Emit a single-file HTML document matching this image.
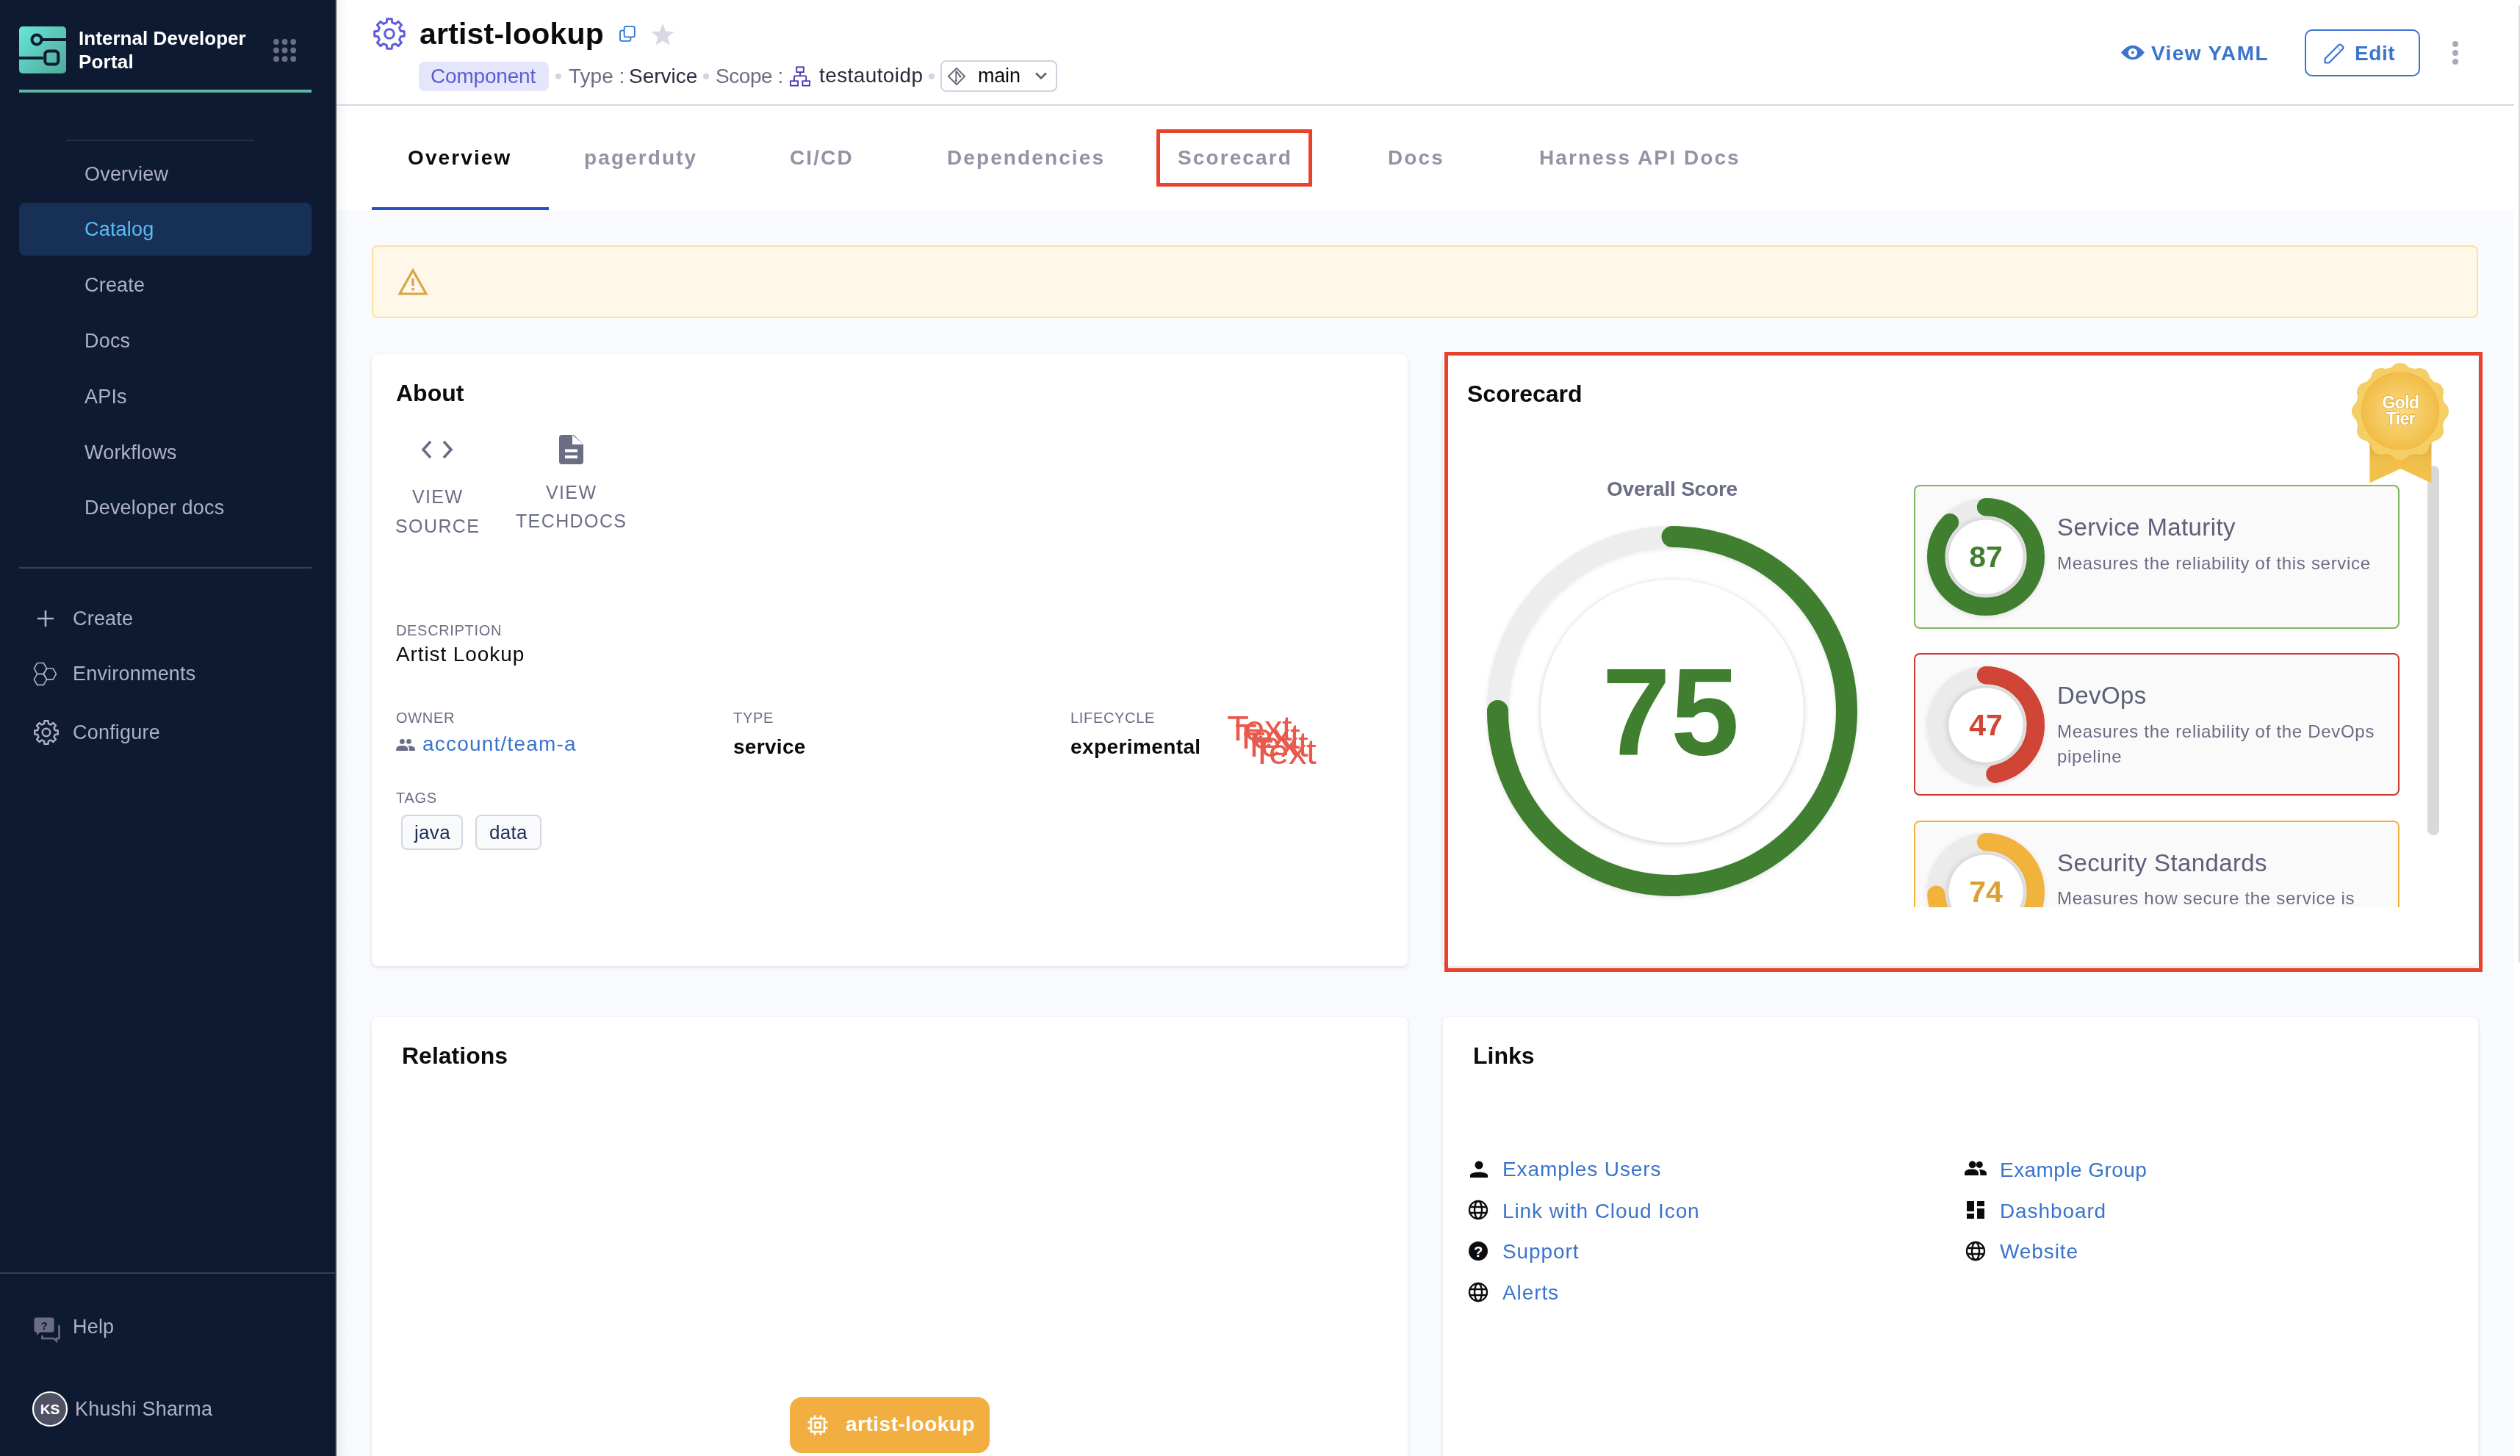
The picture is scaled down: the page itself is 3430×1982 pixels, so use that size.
<!DOCTYPE html>
<html><head><meta charset="utf-8">
<style>
*{box-sizing:border-box;margin:0;padding:0}
html,body{width:3430px;height:1982px;overflow:hidden;background:#fff;font-family:"Liberation Sans",sans-serif}
.a{position:absolute;line-height:1;white-space:nowrap;will-change:transform}
.card{position:absolute;background:#fff;border-radius:8px;box-shadow:0 0 1px rgba(40,41,61,0.10),0 2px 5px rgba(96,97,112,0.15)}
</style></head><body>

<div style="position:absolute;left:0px;top:0px;width:456px;height:1982px;background:#0E1A31"></div>
<div style="position:absolute;left:456px;top:0px;width:2px;height:1982px;background:#383A48"></div>
<svg style="position:absolute;left:26px;top:36px" width="64" height="64" viewBox="0 0 64 64"><defs><linearGradient id="lg" x1="0" y1="0" x2="1" y2="1"><stop offset="0" stop-color="#66E6D6"/><stop offset="1" stop-color="#4FA99B"/></linearGradient></defs>
<rect x="0" y="0" width="64" height="64" rx="5" fill="url(#lg)"/>
<circle cx="24" cy="18" r="6.5" fill="none" stroke="#0E1A31" stroke-width="4"/>
<path d="M30 18H64" stroke="#0E1A31" stroke-width="4"/>
<rect x="35.3" y="33.5" width="18" height="18" rx="4.5" fill="none" stroke="#0E1A31" stroke-width="4"/>
<path d="M0 43H33" stroke="#0E1A31" stroke-width="4"/></svg>
<div class="a" style="left:107.0px;top:38.8px;font-size:26px;color:#fff;font-weight:bold;letter-spacing:0.05px">Internal Developer</div>
<div class="a" style="left:107.0px;top:71.1px;font-size:26px;color:#fff;font-weight:bold;letter-spacing:0.2px">Portal</div>
<svg style="position:absolute;left:372px;top:53px" width="32" height="32" viewBox="0 0 32 32"><circle cx="4" cy="4" r="3.9" fill="#6B6D85"/><circle cx="4" cy="15.5" r="3.9" fill="#6B6D85"/><circle cx="4" cy="27.2" r="3.9" fill="#6B6D85"/><circle cx="15.6" cy="4" r="3.9" fill="#6B6D85"/><circle cx="15.6" cy="15.5" r="3.9" fill="#6B6D85"/><circle cx="15.6" cy="27.2" r="3.9" fill="#6B6D85"/><circle cx="27.2" cy="4" r="3.9" fill="#6B6D85"/><circle cx="27.2" cy="15.5" r="3.9" fill="#6B6D85"/><circle cx="27.2" cy="27.2" r="3.9" fill="#6B6D85"/></svg>
<div style="position:absolute;left:26px;top:122px;width:398px;height:4px;background:#5FB8A0"></div>
<div style="position:absolute;left:90px;top:190px;width:256px;height:2px;background:#262F42"></div>
<div style="position:absolute;left:26px;top:276px;width:398px;height:72px;background:#173156;border-radius:8px"></div>
<div class="a" style="left:114.5px;top:223.5px;font-size:27px;color:#AEB0C4;letter-spacing:0.2px">Overview</div>
<div class="a" style="left:114.5px;top:299.3px;font-size:27px;color:#5BBCF5;letter-spacing:0.2px">Catalog</div>
<div class="a" style="left:114.5px;top:375.1px;font-size:27px;color:#AEB0C4;letter-spacing:0.2px">Create</div>
<div class="a" style="left:114.5px;top:450.9px;font-size:27px;color:#AEB0C4;letter-spacing:0.2px">Docs</div>
<div class="a" style="left:114.5px;top:526.7px;font-size:27px;color:#AEB0C4;letter-spacing:0.2px">APIs</div>
<div class="a" style="left:114.5px;top:602.5px;font-size:27px;color:#AEB0C4;letter-spacing:0.2px">Workflows</div>
<div class="a" style="left:114.5px;top:678.3px;font-size:27px;color:#AEB0C4;letter-spacing:0.2px">Developer docs</div>
<div style="position:absolute;left:26px;top:772px;width:398px;height:2px;background:#3A3F4E"></div>
<svg style="position:absolute;left:50px;top:830px" width="24" height="24" viewBox="0 0 24 24"><path d="M12 1V23M1 12H23" stroke="#AEB0C4" stroke-width="2.6"/></svg>
<div class="a" style="left:99.0px;top:828.5px;font-size:27px;color:#AEB0C4;letter-spacing:0.2px">Create</div>
<svg style="position:absolute;left:44px;top:900px" width="36" height="36" viewBox="0 0 36 36"><g fill="none" stroke="#AEB0C4" stroke-width="1.6"><path d="M19.60,10.00 L15.30,17.45 L6.70,17.45 L2.40,10.00 L6.70,2.55 L15.30,2.55Z"/><path d="M32.50,17.45 L28.20,24.90 L19.60,24.90 L15.30,17.45 L19.60,10.00 L28.20,10.00Z"/><path d="M19.60,24.90 L15.30,32.35 L6.70,32.35 L2.40,24.90 L6.70,17.45 L15.30,17.45Z"/></g></svg>
<div class="a" style="left:99.0px;top:904.4px;font-size:27px;color:#AEB0C4;letter-spacing:0.2px">Environments</div>
<svg style="position:absolute;left:44px;top:978px" width="38" height="38" viewBox="0 0 38 38"><path d="M16.06,7.16 L16.50,3.20 L21.50,3.20 L21.94,7.16 L25.29,8.55 L28.40,6.06 L31.94,9.60 L29.45,12.71 L30.84,16.06 L34.80,16.50 L34.80,21.50 L30.84,21.94 L29.45,25.29 L31.94,28.40 L28.40,31.94 L25.29,29.45 L21.94,30.84 L21.50,34.80 L16.50,34.80 L16.06,30.84 L12.71,29.45 L9.60,31.94 L6.06,28.40 L8.55,25.29 L7.16,21.94 L3.20,21.50 L3.20,16.50 L7.16,16.06 L8.55,12.71 L6.06,9.60 L9.60,6.06 L12.71,8.55Z" fill="none" stroke="#AEB0C4" stroke-width="2.4" stroke-linejoin="round"/><circle cx="19" cy="19" r="5.3" fill="none" stroke="#AEB0C4" stroke-width="2.4"/></svg>
<div class="a" style="left:99.0px;top:984.1px;font-size:27px;color:#AEB0C4;letter-spacing:0.2px">Configure</div>
<div style="position:absolute;left:0px;top:1732px;width:456px;height:2px;background:#3A3F4E"></div>
<svg style="position:absolute;left:46px;top:1793px" width="38" height="36" viewBox="0 0 38 36"><rect x="0.5" y="0.5" width="27" height="20" rx="3" fill="#6B6D85"/><path d="M4 19 L4 25 L10 19Z" fill="#6B6D85"/><path d="M34.5 11 V29 H31 V32.5 L27 29 H11.5 V25" fill="none" stroke="#6B6D85" stroke-width="2.6"/><text x="14" y="17" font-size="15" font-weight="bold" fill="#0E1A31" text-anchor="middle" font-family="Liberation Sans">?</text></svg>
<div class="a" style="left:99.0px;top:1793.1px;font-size:27px;color:#AEB0C4;letter-spacing:0.2px">Help</div>
<svg style="position:absolute;left:43px;top:1893px" width="50" height="50" viewBox="0 0 50 50"><circle cx="25" cy="25" r="23" fill="#4F5063" stroke="#fff" stroke-width="2.2"/><text x="25" y="32" font-size="19" font-weight="bold" fill="#fff" text-anchor="middle" font-family="Liberation Sans">KS</text></svg>
<div class="a" style="left:101.5px;top:1905.3px;font-size:27px;color:#AEB0C4;letter-spacing:0.2px">Khushi Sharma</div>
<div style="position:absolute;left:458px;top:0px;width:2964px;height:1982px;background:#F9FAFE"></div>
<div style="position:absolute;left:458px;top:0px;width:2964px;height:286px;background:#fff"></div>
<div style="position:absolute;left:459px;top:0px;width:13px;height:1982px;background:linear-gradient(90deg,rgba(30,30,60,0.06),rgba(30,30,60,0))"></div>
<div style="position:absolute;left:458px;top:142px;width:2964px;height:2px;background:#D6D7E3"></div>
<div style="position:absolute;left:3422px;top:0px;width:8px;height:1982px;background:#fff"></div>
<div style="position:absolute;left:3428px;top:7px;width:2px;height:1303px;background:#DADADA;border-radius:2px 0 0 2px"></div>
<svg style="position:absolute;left:506px;top:22px" width="48" height="48" viewBox="0 0 48 48"><path d="M20.19,8.67 L20.79,3.75 L27.21,3.75 L27.81,8.67 L32.15,10.46 L36.05,7.42 L40.58,11.95 L37.54,15.85 L39.33,20.19 L44.25,20.79 L44.25,27.21 L39.33,27.81 L37.54,32.15 L40.58,36.05 L36.05,40.58 L32.15,37.54 L27.81,39.33 L27.21,44.25 L20.79,44.25 L20.19,39.33 L15.85,37.54 L11.95,40.58 L7.42,36.05 L10.46,32.15 L8.67,27.81 L3.75,27.21 L3.75,20.79 L8.67,20.19 L10.46,15.85 L7.42,11.95 L11.95,7.42 L15.85,10.46Z" fill="none" stroke="#5F5BE0" stroke-width="3" stroke-linejoin="round"/><circle cx="24" cy="24" r="6.3" fill="none" stroke="#5F5BE0" stroke-width="3"/></svg>
<div class="a" style="left:571.0px;top:25.9px;font-size:41px;color:#0B0B0D;font-weight:bold;letter-spacing:0.2px">artist-lookup</div>
<svg style="position:absolute;left:840px;top:33px" width="28" height="28" viewBox="0 0 28 28"><rect x="9.65" y="3.15" width="14.2" height="14.2" rx="2" fill="none" stroke="#3271CF" stroke-width="1.8"/><path d="M9.65 8.65 H6 a2 2 0 0 0 -2 2 V20.85 a2 2 0 0 0 2 2 H16.35 a2 2 0 0 0 2 -2 V17.35" fill="none" stroke="#3271CF" stroke-width="1.8"/></svg>
<svg style="position:absolute;left:885px;top:30px" width="34" height="34" viewBox="0 0 34 34"><path d="M17 2 L21.2 12.6 L32.5 13.3 L23.8 20.5 L26.6 31.5 L17 25.4 L7.4 31.5 L10.2 20.5 L1.5 13.3 L12.8 12.6Z" fill="#D9D9E3"/></svg>
<div style="position:absolute;left:570px;top:84px;width:177px;height:40px;background:#E5E5FC;border-radius:8px"></div>
<div class="a" style="left:586.0px;top:90.3px;font-size:28px;color:#5C5CD6;letter-spacing:-0.2px">Component</div>
<div style="position:absolute;left:756px;top:100px;width:8px;height:8px;background:#D3D4E0;border-radius:50%"></div>
<div style="position:absolute;left:957px;top:100px;width:8px;height:8px;background:#D3D4E0;border-radius:50%"></div>
<div style="position:absolute;left:1264px;top:100px;width:8px;height:8px;background:#D3D4E0;border-radius:50%"></div>
<div class="a" style="left:773.5px;top:90.3px;font-size:28px;color:#6B6D85;letter-spacing:0px">Type :</div>
<div class="a" style="left:855.6px;top:90.3px;font-size:28px;color:#2A2B3D;letter-spacing:0px">Service</div>
<div class="a" style="left:974.0px;top:90.3px;font-size:28px;color:#6B6D85;letter-spacing:-0.45px">Scope :</div>
<svg style="position:absolute;left:1073px;top:88px" width="32" height="32" viewBox="0 0 32 32"><g fill="none" stroke="#4B2AB5" stroke-width="1.8"><rect x="11.3" y="3.3" width="9.5" height="6.9"/><path d="M16 10.2 V15.4 M8 15.4 H24.2 M8 15.4 V22.3 M24.2 15.4 V22.3"/><rect x="2.9" y="22.3" width="10.2" height="6.3"/><rect x="19.4" y="22.3" width="9.7" height="6.3"/></g></svg>
<div class="a" style="left:1114.6px;top:89.0px;font-size:28px;color:#2A2B3D;letter-spacing:0.4px">testautoidp</div>
<div style="position:absolute;left:1280px;top:82px;width:159px;height:43px;border:2px solid #D1D2DF;border-radius:8px;background:#fff"></div>
<svg style="position:absolute;left:1288px;top:91px" width="28" height="27" viewBox="0 0 28 27"><g fill="none" stroke="#5D5E73" stroke-width="1.8" stroke-linejoin="round"><path d="M14 1.8 L25.1 12.9 L14 24 L2.9 12.9Z"/><path d="M13.3 5.5 V19 M13.3 5.5 L19 13"/></g><circle cx="13.3" cy="19" r="1.5" fill="#5D5E73"/><circle cx="19" cy="13" r="1.5" fill="#5D5E73"/></svg>
<div class="a" style="left:1330.5px;top:89.8px;font-size:27px;color:#0B0B0D;letter-spacing:-0.2px">main</div>
<svg style="position:absolute;left:1408px;top:97px" width="18" height="13" viewBox="0 0 18 13"><path d="M2 2.5 L9 9.5 L16 2.5" fill="none" stroke="#5D5E73" stroke-width="2.6"/></svg>
<svg style="position:absolute;left:2886px;top:61px" width="34" height="22" viewBox="0 0 34 22"><path d="M1 10.5 Q17 -9 33 10.5 Q17 30 1 10.5Z" fill="#3A74CC"/><circle cx="16.9" cy="10.9" r="6.2" fill="#fff"/><circle cx="16.9" cy="10.5" r="1.9" fill="#3A74CC"/></svg>
<div class="a" style="left:2927.6px;top:59.1px;font-size:28px;color:#3A74CC;font-weight:bold;letter-spacing:1.4px">View YAML</div>
<div style="position:absolute;left:3137px;top:40px;width:157px;height:64px;border:2px solid #3A74CC;border-radius:10px"></div>
<svg style="position:absolute;left:3161px;top:55px" width="34" height="34" viewBox="0 0 34 34"><path d="M3.5 25 L22 6.5 a3 3 0 0 1 4 0 l1.5 1.5 a3 3 0 0 1 0 4 L9 30.5 H3.5Z" fill="none" stroke="#3A74CC" stroke-width="2.2" stroke-linejoin="round"/><path d="M21.5 10 L25 13.5" stroke="#9DBBE6" stroke-width="1.4"/></svg>
<div class="a" style="left:3205.0px;top:59.1px;font-size:28px;color:#3A74CC;font-weight:bold;letter-spacing:0.6px">Edit</div>
<div style="position:absolute;left:3338px;top:55.6px;width:8px;height:8.0px;background:#A9AAB9;border-radius:50%"></div>
<div style="position:absolute;left:3338px;top:68px;width:8px;height:8px;background:#A9AAB9;border-radius:50%"></div>
<div style="position:absolute;left:3338px;top:79.8px;width:8px;height:8.0px;background:#A9AAB9;border-radius:50%"></div>
<div class="a" style="left:555.0px;top:201.3px;font-size:28px;color:#0B0B0D;font-weight:bold;letter-spacing:2.1px">Overview</div>
<div class="a" style="left:795.0px;top:201.3px;font-size:28px;color:#9293A4;font-weight:bold;letter-spacing:2.1px">pagerduty</div>
<div class="a" style="left:1075.0px;top:201.3px;font-size:28px;color:#9293A4;font-weight:bold;letter-spacing:2.1px">CI/CD</div>
<div class="a" style="left:1288.6px;top:201.3px;font-size:28px;color:#9293A4;font-weight:bold;letter-spacing:2.1px">Dependencies</div>
<div class="a" style="left:1603.0px;top:201.3px;font-size:28px;color:#9293A4;font-weight:bold;letter-spacing:2.1px">Scorecard</div>
<div class="a" style="left:1889.0px;top:201.3px;font-size:28px;color:#9293A4;font-weight:bold;letter-spacing:2.1px">Docs</div>
<div class="a" style="left:2095.0px;top:201.3px;font-size:28px;color:#9293A4;font-weight:bold;letter-spacing:2.1px">Harness API Docs</div>
<div style="position:absolute;left:506px;top:282px;width:241px;height:4px;background:#2B50C4"></div>
<div style="position:absolute;left:1574px;top:176px;width:212px;height:78px;border:5.5px solid #E8432A"></div>
<div style="position:absolute;left:506px;top:334px;width:2867px;height:99px;background:#FFF8E8;border:2px solid #F7E2A0;border-radius:8px"></div>
<svg style="position:absolute;left:540px;top:364px" width="44" height="40" viewBox="0 0 44 40"><path d="M22 4 L40 36 H4Z" fill="none" stroke="#D9A546" stroke-width="3.2" stroke-linejoin="miter"/><path d="M22 15 V25" stroke="#D9A546" stroke-width="3.2"/><rect x="20.4" y="28" width="3.2" height="3.4" fill="#D9A546"/></svg>
<div class="card" style="left:506px;top:482px;width:1410px;height:833px"></div>
<div class="card" style="left:1964px;top:482px;width:1409px;height:833px"></div>
<div class="card" style="left:506px;top:1384px;width:1410px;height:700px"></div>
<div class="card" style="left:1964px;top:1384px;width:1409px;height:700px"></div>
<div class="a" style="left:539.0px;top:518.9px;font-size:32px;color:#0B0B0D;font-weight:bold;letter-spacing:0px">About</div>
<svg style="position:absolute;left:573px;top:598px" width="44" height="28" viewBox="0 0 44 28"><path d="M13 3 L3 14 L13 25 M31 3 L41 14 L31 25" fill="none" stroke="#6B6D85" stroke-width="3.6"/></svg>
<div class="a" style="left:94.5px;width:1000px;text-align:center;top:663.8px;font-size:25px;color:#6B6D85;letter-spacing:1.4px;padding-left:1.4px">VIEW</div>
<div class="a" style="left:94.5px;width:1000px;text-align:center;top:703.8px;font-size:25px;color:#6B6D85;letter-spacing:1.4px;padding-left:1.4px">SOURCE</div>
<svg style="position:absolute;left:761px;top:591px" width="34" height="42" viewBox="0 0 34 42"><path d="M4 1 H20 L33 14 V37 a4 4 0 0 1 -4 4 H4 a4 4 0 0 1 -4 -4 V5 a4 4 0 0 1 4 -4Z" fill="#6B6D85"/><path d="M18 1 V14 H33Z" fill="#fff"/><rect x="8" y="20.5" width="17" height="4" fill="#fff"/><rect x="8" y="29" width="17" height="4" fill="#fff"/></svg>
<div class="a" style="left:276.8px;width:1000px;text-align:center;top:658.2px;font-size:25px;color:#6B6D85;letter-spacing:1.4px;padding-left:1.4px">VIEW</div>
<div class="a" style="left:276.8px;width:1000px;text-align:center;top:697.2px;font-size:25px;color:#6B6D85;letter-spacing:1.4px;padding-left:1.4px">TECHDOCS</div>
<div class="a" style="left:539.0px;top:847.6px;font-size:20px;color:#6B6D85;letter-spacing:0.67px">DESCRIPTION</div>
<div class="a" style="left:539.0px;top:877.3px;font-size:28px;color:#0B0B0D;letter-spacing:0.9px">Artist Lookup</div>
<div class="a" style="left:539.0px;top:966.8px;font-size:20px;color:#6B6D85;letter-spacing:0.67px">OWNER</div>
<svg style="position:absolute;left:538px;top:1004px" width="30" height="20" viewBox="0 0 30 20"><circle cx="9.4" cy="5.4" r="3.4" fill="#6B6D85"/><circle cx="18.5" cy="5.4" r="3.3" fill="#6B6D85"/><path d="M1.2 18 V15.8 Q1.2 11 9.3 11 Q17.3 11 17.3 15.8 V18Z" fill="#6B6D85"/><path d="M18.6 11.2 Q26.9 11.5 26.9 15.8 V18 H19 V15.8 Q19 13.2 17.6 11.4Z" fill="#6B6D85"/></svg>
<div class="a" style="left:575.4px;top:999.3px;font-size:28px;color:#3A74CC;letter-spacing:1.2px">account/team-a</div>
<div class="a" style="left:998.0px;top:966.8px;font-size:20px;color:#6B6D85;letter-spacing:0.67px">TYPE</div>
<div class="a" style="left:998.0px;top:1003.3px;font-size:28px;color:#0B0B0D;font-weight:bold;letter-spacing:0.3px">service</div>
<div class="a" style="left:1457.0px;top:967.1px;font-size:20px;color:#6B6D85;letter-spacing:0.67px">LIFECYCLE</div>
<div class="a" style="left:1457.0px;top:1002.8px;font-size:28px;color:#0B0B0D;font-weight:bold;letter-spacing:0.4px">experimental</div>
<div class="a" style="left:1670.0px;top:967.3px;font-size:49px;color:#E85A4C;letter-spacing:-0.4px">Text</div>
<div class="a" style="left:1681.0px;top:977.9px;font-size:49px;color:#E85A4C;letter-spacing:-0.4px">Text</div>
<div class="a" style="left:1692.0px;top:988.5px;font-size:49px;color:#E85A4C;letter-spacing:-0.4px">Text</div>
<div class="a" style="left:1703.0px;top:999.1px;font-size:49px;color:#E85A4C;letter-spacing:-0.4px">Text</div>
<div class="a" style="left:539.0px;top:1076.1px;font-size:20px;color:#6B6D85;letter-spacing:0.67px">TAGS</div>
<div style="position:absolute;left:546px;top:1109px;width:84px;height:48px;border:2px solid #D5D6E1;border-radius:8px;background:#F9FAFC"></div>
<div style="position:absolute;left:647px;top:1109px;width:90px;height:48px;border:2px solid #D5D6E1;border-radius:8px;background:#F9FAFC"></div>
<div class="a" style="left:564.0px;top:1120.0px;font-size:26px;color:#1E2C52;letter-spacing:0.3px">java</div>
<div class="a" style="left:665.6px;top:1120.0px;font-size:26px;color:#1E2C52;letter-spacing:0.3px">data</div>
<div class="a" style="left:1997.0px;top:519.6px;font-size:32px;color:#0B0B0D;font-weight:bold;letter-spacing:0px">Scorecard</div>
<div class="a" style="left:2187.0px;top:652.3px;font-size:28px;color:#6B6D85;font-weight:bold;letter-spacing:-0.2px">Overall Score</div>
<svg style="position:absolute;left:2006px;top:698px" width="540" height="540" viewBox="0 0 540 540"><defs><filter id="sh" x="-20%" y="-20%" width="140%" height="140%"><feGaussianBlur stdDeviation="3"/></filter></defs><circle cx="270" cy="272" r="237.5" fill="none" stroke="rgba(0,0,0,0.10)" stroke-width="29" filter="url(#sh)"/><circle cx="270" cy="270" r="237.5" fill="none" stroke="#EDEDED" stroke-width="29"/><circle cx="270" cy="270" r="237.5" fill="none" stroke="#3F7F2F" stroke-width="29" stroke-linecap="round" stroke-dasharray="1119.2 1492.2565104551518" transform="rotate(-90 270 270)"/><circle cx="270" cy="271.5" r="180" fill="rgba(0,0,0,0.16)" filter="url(#sh)"/><circle cx="270" cy="270" r="179" fill="#fff"/></svg>
<div class="a" style="left:1774.0px;width:1000px;text-align:center;top:885.3px;font-size:168px;color:#3F7F2F;font-weight:bold;letter-spacing:0px">75</div>
<div style="position:absolute;left:3304px;top:634px;width:16px;height:503px;background:#D9D9D9;border-radius:8px"></div>
<svg style="position:absolute;left:3197px;top:490px" width="141" height="172" viewBox="0 0 141 172"><defs><radialGradient id="mg" cx="0.5" cy="0.5" r="0.5"><stop offset="0" stop-color="#F8DC88"/><stop offset="1" stop-color="#F2BD46"/></radialGradient><linearGradient id="rg" x1="0" y1="0" x2="0" y2="1"><stop offset="0" stop-color="#D49F33"/><stop offset="0.55" stop-color="#F0BE4A"/><stop offset="1" stop-color="#F3C24D"/></linearGradient></defs><path d="M28.5 100 H112.5 V167.5 L70.5 148 L28.5 167.5Z" fill="url(#rg)"/><g fill="#F5CE66"><circle cx="70" cy="70" r="61"/><circle cx="70.00" cy="18.00" r="14"/><circle cx="96.00" cy="24.97" r="14"/><circle cx="115.03" cy="44.00" r="14"/><circle cx="122.00" cy="70.00" r="14"/><circle cx="115.03" cy="96.00" r="14"/><circle cx="96.00" cy="115.03" r="14"/><circle cx="70.00" cy="122.00" r="14"/><circle cx="44.00" cy="115.03" r="14"/><circle cx="24.97" cy="96.00" r="14"/><circle cx="18.00" cy="70.00" r="14"/><circle cx="24.97" cy="44.00" r="14"/><circle cx="44.00" cy="24.97" r="14"/></g><circle cx="70" cy="69.5" r="52.5" fill="url(#mg)" stroke="#EFB743" stroke-width="1.2"/><text x="70.5" y="65.7" font-size="23" font-weight="bold" fill="#fff" stroke="#EAAE3C" stroke-width="2.2" paint-order="stroke" text-anchor="middle" font-family="Liberation Sans" letter-spacing="-0.6">Gold</text><text x="70.5" y="87.5" font-size="23" font-weight="bold" fill="#fff" stroke="#EAAE3C" stroke-width="2.2" paint-order="stroke" text-anchor="middle" font-family="Liberation Sans" letter-spacing="-0.6">Tier</text></svg>
<div style="position:absolute;left:2590px;top:640px;width:700px;height:595px;overflow:hidden">
<div style="position:absolute;left:15px;top:20px;width:661px;height:196px;border:2px solid #7DB65F;border-radius:8px;background:#FAFAFB"></div>
<svg style="position:absolute;left:18px;top:22.5px" width="190" height="190" viewBox="0 0 190 190"><defs><filter id="s87" x="-30%" y="-30%" width="160%" height="160%"><feGaussianBlur stdDeviation="3"/></filter></defs><circle cx="95" cy="97" r="80" fill="rgba(0,0,0,0.10)" filter="url(#s87)"/><circle cx="95" cy="95" r="80" fill="#EBEBEB"/><circle cx="95" cy="95" r="67.8" fill="none" stroke="#3F7F2F" stroke-width="24.4" stroke-linecap="round" stroke-dasharray="370.6 425.9999638267759" transform="rotate(-90 95 95)"/><circle cx="95" cy="96" r="54" fill="rgba(0,0,0,0.10)" filter="url(#s87)"/><circle cx="95" cy="95" r="53.5" fill="#DCDCDC"/><circle cx="95" cy="95" r="50.5" fill="#fff"/></svg>
<div class="a" style="left:-387.5px;width:1000px;text-align:center;top:97.8px;font-size:41px;color:#3F7F2F;font-weight:bold;letter-spacing:0px">87</div>
<div class="a" style="left:209.6px;top:61.1px;font-size:33px;color:#5D6079;letter-spacing:0.4px">Service Maturity</div>
<div class="a" style="left:209.6px;top:114.7px;font-size:24px;color:#6B6D85;letter-spacing:0.7px">Measures the reliability of this service</div>
<div style="position:absolute;left:15px;top:249px;width:661px;height:194px;border:2px solid #CC3A2E;border-radius:8px;background:#FAFAFB"></div>
<svg style="position:absolute;left:18px;top:251.5px" width="190" height="190" viewBox="0 0 190 190"><defs><filter id="s47" x="-30%" y="-30%" width="160%" height="160%"><feGaussianBlur stdDeviation="3"/></filter></defs><circle cx="95" cy="97" r="80" fill="rgba(0,0,0,0.10)" filter="url(#s47)"/><circle cx="95" cy="95" r="80" fill="#EBEBEB"/><circle cx="95" cy="95" r="67.8" fill="none" stroke="#D04535" stroke-width="24.4" stroke-linecap="round" stroke-dasharray="200.2 425.9999638267759" transform="rotate(-90 95 95)"/><circle cx="95" cy="96" r="54" fill="rgba(0,0,0,0.10)" filter="url(#s47)"/><circle cx="95" cy="95" r="53.5" fill="#DCDCDC"/><circle cx="95" cy="95" r="50.5" fill="#fff"/></svg>
<div class="a" style="left:-387.5px;width:1000px;text-align:center;top:326.8px;font-size:41px;color:#D04535;font-weight:bold;letter-spacing:0px">47</div>
<div class="a" style="left:209.6px;top:290.1px;font-size:33px;color:#5D6079;letter-spacing:0.4px">DevOps</div>
<div class="a" style="left:209.6px;top:343.7px;font-size:24px;color:#6B6D85;letter-spacing:0.7px">Measures the reliability of the DevOps</div>
<div class="a" style="left:209.6px;top:377.7px;font-size:24px;color:#6B6D85;letter-spacing:0.7px">pipeline</div>
<div style="position:absolute;left:15px;top:476.5px;width:661px;height:195.5px;border:2px solid #F2B33D;border-radius:8px;background:#FAFAFB"></div>
<svg style="position:absolute;left:18px;top:479.0px" width="190" height="190" viewBox="0 0 190 190"><defs><filter id="s74" x="-30%" y="-30%" width="160%" height="160%"><feGaussianBlur stdDeviation="3"/></filter></defs><circle cx="95" cy="97" r="80" fill="rgba(0,0,0,0.10)" filter="url(#s74)"/><circle cx="95" cy="95" r="80" fill="#EBEBEB"/><circle cx="95" cy="95" r="67.8" fill="none" stroke="#F2B33D" stroke-width="24.4" stroke-linecap="round" stroke-dasharray="315.2 425.9999638267759" transform="rotate(-90 95 95)"/><circle cx="95" cy="96" r="54" fill="rgba(0,0,0,0.10)" filter="url(#s74)"/><circle cx="95" cy="95" r="53.5" fill="#DCDCDC"/><circle cx="95" cy="95" r="50.5" fill="#fff"/></svg>
<div class="a" style="left:-387.5px;width:1000px;text-align:center;top:554.3px;font-size:41px;color:#D9A032;font-weight:bold;letter-spacing:0px">74</div>
<div class="a" style="left:209.6px;top:517.6px;font-size:33px;color:#5D6079;letter-spacing:0.4px">Security Standards</div>
<div class="a" style="left:209.6px;top:571.2px;font-size:24px;color:#6B6D85;letter-spacing:0.7px">Measures how secure the service is</div>
</div>
<div style="position:absolute;left:1966px;top:479px;width:1413px;height:844px;border:5.5px solid #E8432A"></div>
<div class="a" style="left:547.0px;top:1420.7px;font-size:32px;color:#0B0B0D;font-weight:bold;letter-spacing:0px">Relations</div>
<div style="position:absolute;left:1075px;top:1902px;width:272px;height:76px;background:#F2AE40;border-radius:16px"></div>
<svg style="position:absolute;left:1098px;top:1925px" width="30" height="30" viewBox="0 0 30 30"><g fill="none" stroke="#fff" stroke-width="2.6"><rect x="6" y="6" width="18" height="18"/><rect x="11.5" y="11.5" width="7" height="7"/></g><g stroke="#fff" stroke-width="2.6"><path d="M11 1.5V6 M19 1.5V6 M11 24V28.5 M19 24V28.5 M1.5 11H6 M1.5 19H6 M24 11H28.5 M24 19H28.5"/></g></svg>
<div class="a" style="left:1150.6px;top:1924.8px;font-size:28px;color:#fff;font-weight:bold;letter-spacing:0.5px">artist-lookup</div>
<div class="a" style="left:2005.0px;top:1421.4px;font-size:32px;color:#0B0B0D;font-weight:bold;letter-spacing:0px">Links</div>
<svg style="position:absolute;left:1999px;top:1580px" width="28" height="24" viewBox="0 0 28 24"><circle cx="14" cy="6" r="5.5" fill="#0B0B0D"/><path d="M2 23 V20 C2 14 26 14 26 20 V23Z" fill="#0B0B0D"/></svg>
<div class="a" style="left:2045.0px;top:1578.0px;font-size:28px;color:#3A74CC;letter-spacing:0.9px">Examples Users</div>
<svg style="position:absolute;left:1998px;top:1633px" width="28" height="28" viewBox="0 0 28 28"><g fill="none" stroke="#0B0B0D" stroke-width="2.4"><circle cx="14" cy="14" r="12"/><ellipse cx="14" cy="14" rx="5" ry="12"/><path d="M2.5 10H25.5M2.5 18H25.5"/></g></svg>
<div class="a" style="left:2045.0px;top:1634.5px;font-size:28px;color:#3A74CC;letter-spacing:0.9px">Link with Cloud Icon</div>
<svg style="position:absolute;left:1998px;top:1689px" width="28" height="28" viewBox="0 0 28 28"><circle cx="14" cy="14" r="13" fill="#0B0B0D"/><text x="14" y="21.5" font-size="20" font-weight="bold" fill="#fff" text-anchor="middle" font-family="Liberation Sans">?</text></svg>
<div class="a" style="left:2045.0px;top:1689.8px;font-size:28px;color:#3A74CC;letter-spacing:0.9px">Support</div>
<svg style="position:absolute;left:1998px;top:1744.5px" width="28" height="28" viewBox="0 0 28 28"><g fill="none" stroke="#0B0B0D" stroke-width="2.4"><circle cx="14" cy="14" r="12"/><ellipse cx="14" cy="14" rx="5" ry="12"/><path d="M2.5 10H25.5M2.5 18H25.5"/></g></svg>
<div class="a" style="left:2045.0px;top:1745.7px;font-size:28px;color:#3A74CC;letter-spacing:0.9px">Alerts</div>
<svg style="position:absolute;left:2673px;top:1579px" width="32" height="22" viewBox="0 0 32 22"><circle cx="11.7" cy="6.4" r="4.9" fill="#0B0B0D"/><circle cx="21.3" cy="6.4" r="4.5" fill="#0B0B0D"/><path d="M1 21 V18.3 Q1 12.6 10.8 12.6 Q20 12.6 20 18.3 V21Z" fill="#0B0B0D"/><path d="M21.6 12.9 Q31 13.3 31 18.3 V21 H22.3 V18.3 Q22.3 15.2 20.8 13.3Z" fill="#0B0B0D"/></svg>
<div class="a" style="left:2722.0px;top:1579.0px;font-size:28px;color:#3A74CC;letter-spacing:0.45px">Example Group</div>
<svg style="position:absolute;left:2676px;top:1634px" width="26" height="26" viewBox="0 0 26 26"><path d="M1 1H11V15H1Z M15 1H25V8H15Z M15 11H25V25H15Z M1 18H11V25H1Z" fill="#0B0B0D"/></svg>
<div class="a" style="left:2722.0px;top:1634.8px;font-size:28px;color:#3A74CC;letter-spacing:0.9px">Dashboard</div>
<svg style="position:absolute;left:2675px;top:1689px" width="28" height="28" viewBox="0 0 28 28"><g fill="none" stroke="#0B0B0D" stroke-width="2.4"><circle cx="14" cy="14" r="12"/><ellipse cx="14" cy="14" rx="5" ry="12"/><path d="M2.5 10H25.5M2.5 18H25.5"/></g></svg>
<div class="a" style="left:2722.0px;top:1690.3px;font-size:28px;color:#3A74CC;letter-spacing:0.9px">Website</div>
</body></html>
